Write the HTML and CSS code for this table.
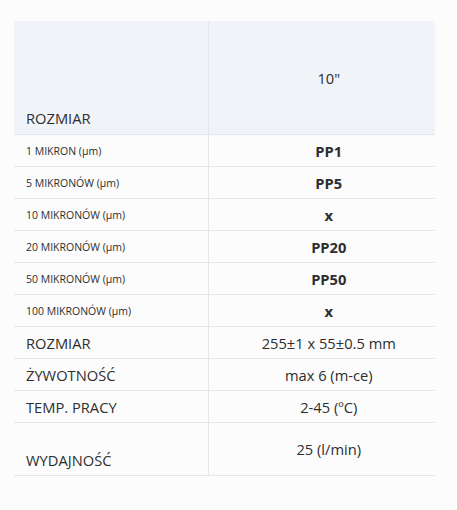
FILE: index.html
```html
<!DOCTYPE html>
<html lang="pl">
<head>
<meta charset="utf-8">
<link rel="stylesheet" href="styles.css">
</head>
<body>
<table class="spec">
  <thead>
    <tr class="head">
      <th class="label bottom">ROZMIAR</th>
      <th class="value">10"</th>
    </tr>
  </thead>
  <tbody>
    <tr><td class="label small">1 MIKRON (µm)</td><td class="value strong">PP1</td></tr>
    <tr><td class="label small">5 MIKRONÓW (µm)</td><td class="value strong">PP5</td></tr>
    <tr><td class="label small">10 MIKRONÓW (µm)</td><td class="value strong">x</td></tr>
    <tr><td class="label small">20 MIKRONÓW (µm)</td><td class="value strong">PP20</td></tr>
    <tr><td class="label small">50 MIKRONÓW (µm)</td><td class="value strong">PP50</td></tr>
    <tr><td class="label small">100 MIKRONÓW (µm)</td><td class="value strong">x</td></tr>
    <tr><td class="label">ROZMIAR</td><td class="value">255±1 x 55±0.5 mm</td></tr>
    <tr><td class="label">ŻYWOTNOŚĆ</td><td class="value">max 6 (m-ce)</td></tr>
    <tr><td class="label">TEMP. PRACY</td><td class="value">2-45 (ºC)</td></tr>
    <tr class="tall"><td class="label bottom">WYDAJNOŚĆ</td><td class="value">25 (l/min)</td></tr>
  </tbody>
</table>
</body>
</html>
```
FILE: styles.css
```css
html, body {
  margin: 0;
  background: #fcfcfc;
}
body {
  padding: 21px 14px;
  font-family: "Open Sans", "Liberation Sans", sans-serif;
  color: #2e2e2e;
}
.spec {
  width: 421px;
  border-collapse: collapse;
  table-layout: fixed;
}
.spec th, .spec td {
  border-bottom: 1px solid #e3e6ea;
  font-weight: normal;
  font-size: 14.7px;
  height: 31px;
  padding: 0 12px;
  vertical-align: middle;
}
.spec .label {
  width: 194px;
  text-align: left;
  border-right: 1px solid #e3e6ea;
  box-sizing: border-box;
}
.spec .value {
  text-align: center;
  padding-left: 26px;
}
.head th {
  background: #f0f3f8;
  height: 113px;
}
.spec .bottom {
  vertical-align: bottom;
  padding-bottom: 6px;
}
.spec .small {
  font-size: 10.5px;
}
.spec .strong {
  font-weight: bold;
}
.tall td {
  height: 52px;
}
.tall .bottom {
  padding-bottom: 5px;
}
```
